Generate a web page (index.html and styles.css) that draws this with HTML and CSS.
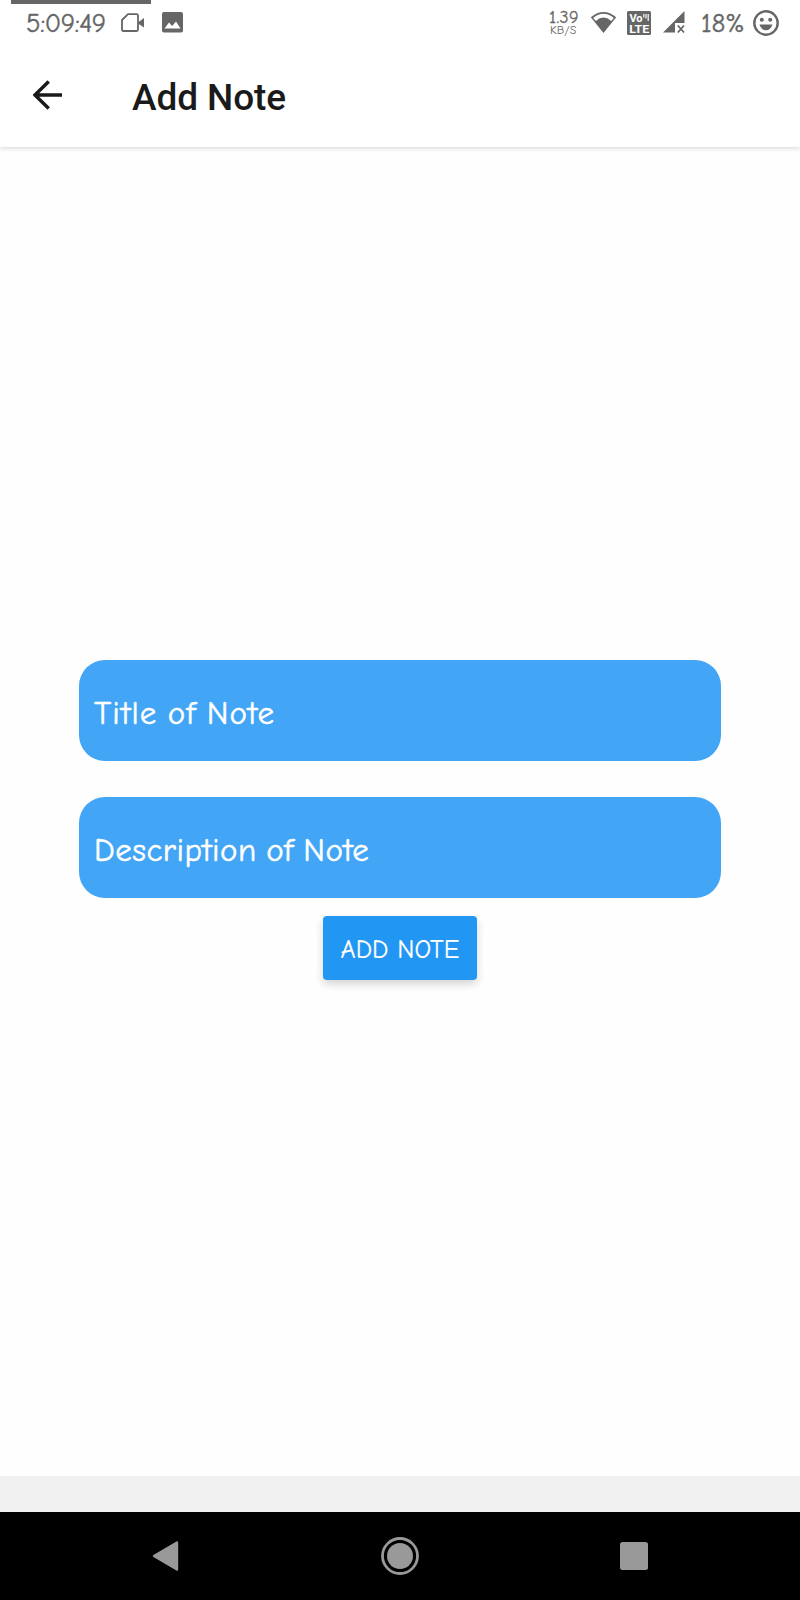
FILE: index.html
```html
<!DOCTYPE html>
<html lang="en">
<head>
<meta charset="utf-8">
<title>Add Note</title>
<link rel="stylesheet" href="styles.css">
</head>
<body>
<div class="screen">
  <div class="recording-line"></div>
  <header class="top">
    <div class="status">
      <div class="status-left">
        <span class="clock">5:09:49</span>
        <svg class="camera" width="24" height="20" viewBox="0 0 24 20"><path d="M7 1.2H15.5Q17 1.2 17 2.7V16.5Q17 18 15.5 18H2.5Q1 18 1 16.5V7Z" fill="none" stroke="#666" stroke-width="1.8" stroke-linejoin="round"/><path d="M17 9.5L23 5V14.5L17 10.5Z" fill="#666"/></svg>
        <svg width="21" height="21" viewBox="0 0 21 21"><rect width="21" height="20.5" rx="2" fill="#666"/><path d="M2.5 16.5L7 10.5L10.2 14L14 9.5L18.5 16.5Z" fill="#fff"/></svg>
      </div>
      <div class="status-right">
        <div class="speed"><span class="rate">1.39</span><span class="unit">KB/S</span></div>
        <svg class="wifi" width="27" height="23" viewBox="0 0 27 23"><path d="M.8 6.2Q13.5-4.3 26.2 6.2L13.5 22Z" fill="#666"/><path d="M3.2 6.9Q13.5-1.2 23.8 6.9L21.2 10Q13.5 3.2 5.8 10Z" fill="#fff"/></svg>
        <svg class="volte" width="24" height="24" viewBox="0 0 24 24"><rect width="24" height="24" rx="1.5" fill="#666"/><text x="2.5" y="11" textLength="13" class="badge-text">Vo</text><path d="M16.8 3V6.5M19 3V7.5M21.2 3V10" stroke="#fff" stroke-width="1.2"/><text x="2.2" y="22" textLength="20" lengthAdjust="spacingAndGlyphs" class="badge-text">LTE</text></svg>
        <svg class="signal" width="22" height="23" viewBox="0 0 22 23"><path d="M0 21.5L21.5 0V12H12V21.5Z" fill="#666"/><path d="M14.8 14.5L21 21.5M21 14.5L14.8 21.5" stroke="#666" stroke-width="1.8"/></svg>
        <span class="battery">18%</span>
        <svg width="26" height="26" viewBox="0 0 26 26"><circle cx="13" cy="13" r="11.7" fill="none" stroke="#666" stroke-width="2.4"/><circle cx="8.8" cy="9.8" r="2" fill="#666"/><circle cx="17.2" cy="9.8" r="2" fill="#666"/><path d="M6.5 14.5H19.5Q17.5 20.3 13 20.3T6.5 14.5Z" fill="#666"/></svg>
      </div>
    </div>
    <div class="appbar">
      <svg class="back" width="30" height="30" viewBox="0 0 30 30"><path d="M29 15H2M15.7 1.5L2 15L15.7 28.5" fill="none" stroke="#1a1a1a" stroke-width="3.4"/></svg>
      <h1 class="title">Add Note</h1>
    </div>
  </header>
  <main class="form">
    <div class="field"><span class="hint hint-title">Title of Note</span></div>
    <div class="field"><span class="hint hint-description">Description of Note</span></div>
    <button class="add">ADD NOTE</button>
  </main>
  <div class="strip"></div>
  <nav class="nav">
    <svg width="28" height="32" viewBox="0 0 28 32"><path d="M2 16L25 2.5V29.5Z" fill="#999" stroke="#999" stroke-width="2.4" stroke-linejoin="round"/></svg>
    <svg width="38" height="38" viewBox="0 0 38 38"><circle cx="19" cy="19" r="17.5" fill="none" stroke="#999" stroke-width="2.8"/><circle cx="19" cy="19" r="13" fill="#999"/></svg>
    <svg width="28" height="28" viewBox="0 0 28 28"><rect width="28" height="28" rx="2.5" fill="#999"/></svg>
  </nav>
</div>
</body>
</html>
```
FILE: styles.css
```css
* { box-sizing: border-box; }
body { margin: 0; background: #fff; }
svg { display: block; flex: none; }
.screen {
  position: relative;
  width: 800px;
  height: 1600px;
  display: flex;
  flex-direction: column;
  background: #fefefe;
  font-family: "Comic Neue", "Noto Sans", sans-serif;
}
.recording-line {
  position: absolute;
  top: 0;
  left: 11px;
  width: 140px;
  height: 4px;
  background: #666;
}
.top {
  height: 147px;
  flex: none;
  background: #fff;
  box-shadow: 0 1px 5px rgba(0, 0, 0, .17);
}
.status {
  height: 45px;
  padding: 0 21px 0 26px;
  display: flex;
  justify-content: space-between;
  align-items: center;
  color: #666;
}
.status-left, .status-right { display: flex; align-items: center; white-space: nowrap; }
.clock {
  width: 79px;
  margin-right: 16px;
  padding-top: 1px;
  font-size: 27px;
  letter-spacing: -.4px;
  -webkit-text-stroke: .4px #666;
}
.camera { margin-right: 17px; }
.speed {
  width: 30px;
  margin-right: 11px;
  padding-top: 1px;
  display: flex;
  flex-direction: column;
}
.rate { font-size: 18px; line-height: 15px; letter-spacing: .3px; -webkit-text-stroke: .3px #666; }
.unit { padding-left: 1px; font-size: 12px; line-height: 11px; letter-spacing: .1px; }
.wifi { margin-right: 10px; }
.volte { margin-right: 12px; }
.signal { margin-right: 16px; }
.badge-text { font: 700 11px Roboto, sans-serif; fill: #fff; }
.battery {
  width: 44px;
  margin-right: 8px;
  padding-top: 1px;
  font-size: 27px;
  letter-spacing: -.2px;
  -webkit-text-stroke: .4px #666;
}
.appbar {
  height: 102px;
  padding-left: 33px;
  display: flex;
  align-items: center;
}
.back { margin: -3px 69px 0 0; }
.title {
  margin: 0;
  padding-top: 3px;
  font: 500 37px/44px Roboto, sans-serif;
  letter-spacing: -.1px;
  color: #1a1a1a;
  white-space: nowrap;
}
.form {
  flex: 1;
  padding: 513px 79px 0;
  display: flex;
  flex-direction: column;
  align-items: center;
}
.field {
  width: 642px;
  height: 101px;
  flex: none;
  padding: 5px 15px 0;
  display: flex;
  align-items: center;
  border-radius: 26px;
  background: #42a5f5;
  color: #fff;
}
.field + .field { margin-top: 36px; }
.hint { font-size: 33px; white-space: nowrap; -webkit-text-stroke: .5px #fff; }
.hint-title { letter-spacing: 1.1px; word-spacing: -1.8px; }
.hint-description { letter-spacing: .5px; word-spacing: -2px; }
.add {
  width: 154px;
  height: 64px;
  margin-top: 18px;
  padding: 3px 0 0;
  border: 0;
  border-radius: 4px;
  background: #2196f3;
  box-shadow: 0 4px 8px rgba(0, 0, 0, .17);
  color: #fff;
  font: 26px "Comic Neue", "Noto Sans", sans-serif;
  letter-spacing: .1px;
  white-space: nowrap;
  -webkit-text-stroke: .2px #fff;
}
.strip { height: 36px; flex: none; background: #f1f1f1; }
.nav {
  height: 88px;
  flex: none;
  padding: 0 152px;
  display: flex;
  justify-content: space-between;
  align-items: center;
  background: #000;
}
```
